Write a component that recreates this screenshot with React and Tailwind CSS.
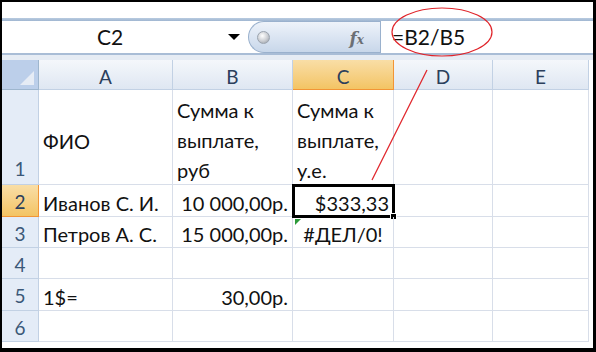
import React from "react";

const cols = ["A", "B", "C", "D", "E"];

function ColHeader({ label, active }) {
  return (
    <div
      className={`flex items-center justify-center pt-[5px] text-[19px] border-r border-b ${
        active
          ? "bg-gradient-to-b from-[#f9dea6] to-[#f3c463] border-[#f29536] text-[#2b3f5c]"
          : "bg-gradient-to-b from-[#f4f7fb] to-[#dfe7f2] border-[#c2d1e4] text-[#2b3f5c]"
      }`}
    >
      {label}
    </div>
  );
}

function RowHeader({ n, active, align = "center" }) {
  return (
    <div
      className={`flex justify-center text-[19px] border-r border-b ${
        align === "end" ? "items-end pb-[1px]" : "items-center pt-[4px]"
      } ${
        active
          ? "bg-gradient-to-b from-[#f9dea6] to-[#f3c463] border-[#f29536] text-[#2b3f5c]"
          : "bg-[#e4ecf7] border-[#c2d1e4] text-[#3b5878]"
      }`}
    >
      {n}
    </div>
  );
}

function Cell({ children, className = "" }) {
  return (
    <div className={`border-r border-b border-[#d8dee9] text-[20px] text-[#111] flex items-center px-[4px] pt-[4px] whitespace-nowrap ${className}`}>
      {children}
    </div>
  );
}

export default function App() {
  return (
    <div className="relative w-[596px] h-[352px] bg-white border-black border-t-2 border-l-2 border-r-[3px] border-b-[4px] font-['Lato',sans-serif] overflow-hidden">
      {/* ribbon bottom */}
      <div className="h-[16px] bg-white" />
      <div className="h-[3px] bg-gradient-to-b from-[#b9cbe0] to-[#9fb6d1]" />

      {/* formula bar */}
      <div className="flex h-[32px] bg-white">
        <div className="w-[246px] flex items-center relative">
          <span className="w-full text-center text-[21px] text-[#111] pr-[30px]">C2</span>
          <span className="absolute left-[226px] top-[13px] w-0 h-0 border-l-[6px] border-r-[6px] border-t-[6px] border-l-transparent border-r-transparent border-t-black" />
        </div>
        <div className="w-[132px] flex items-center rounded-l-full border border-r-0 border-[#9ab1cd] bg-gradient-to-b from-[#eef3fa] to-[#c8d7ea] relative">
          <span className="ml-[8px] w-[13px] h-[13px] rounded-full bg-[radial-gradient(circle_at_40%_35%,#ffffff,#c9ccd1_55%,#8e949c)] border border-[#9aa3ae]" />
          <span className="absolute right-[16px] top-[4px] font-['DejaVu_Serif',serif] italic text-[#6b6f75] text-[17px] font-bold">
            f<span className="text-[12px]">x</span>
          </span>
        </div>
        <div className="flex-1 flex items-center border-l border-[#9ab1cd] pl-[11px] text-[21px] text-[#111]">
          =B2/B5
        </div>
      </div>
      <div className="h-[2px] bg-[#a9bdd6]" />
      <div className="h-[5px] bg-[#e6ecf4]" />

      {/* grid */}
      <div className="grid grid-cols-[37px_134px_120px_101px_99px_96px] grid-rows-[30px_95px_32px_31px_31px_32px_31px] w-[587px]">
        <div className="relative bg-[#bccfea] border-r border-b border-[#9eb6ce]">
          <span className="absolute right-[4px] bottom-[4px] w-0 h-0 border-b-[14px] border-l-[14px] border-b-[#e6ecf5] border-l-transparent" />
        </div>
        {cols.map((c) => (
          <ColHeader key={c} label={c} active={c === "C"} />
        ))}

        {/* row 1 */}
        <RowHeader n="1" align="end" />
        <Cell className="pt-[8px]">ФИО</Cell>
        <Cell className="flex-col !items-start justify-center leading-[30px] !pt-[6px]">
          <span>Сумма к</span>
          <span>выплате,</span>
          <span>руб</span>
        </Cell>
        <Cell className="flex-col !items-start justify-center leading-[30px] !pt-[6px]">
          <span>Сумма к</span>
          <span>выплате,</span>
          <span>у.е.</span>
        </Cell>
        <Cell />
        <Cell />

        {/* row 2 */}
        <RowHeader n="2" active />
        <Cell>Иванов С. И.</Cell>
        <Cell className="justify-end">10 000,00р.</Cell>
        <Cell className="justify-end relative">
          <div className="absolute -left-[1px] -top-[1px] w-[103px] h-[34px] border-[3px] border-black" />
          <div className="absolute -right-[4px] -bottom-[4px] w-[7px] h-[7px] bg-black border border-white" />
          <span className="relative">$333,33</span>
        </Cell>
        <Cell />
        <Cell />

        {/* row 3 */}
        <RowHeader n="3" />
        <Cell>Петров А. С.</Cell>
        <Cell className="justify-end">15 000,00р.</Cell>
        <Cell className="justify-center relative">
          <span className="absolute left-[2px] top-[2px] w-0 h-0 border-t-[6px] border-r-[6px] border-t-[#2c9a3a] border-r-transparent" />
          #ДЕЛ/0!
        </Cell>
        <Cell />
        <Cell />

        {/* row 4 */}
        <RowHeader n="4" />
        <Cell />
        <Cell />
        <Cell />
        <Cell />
        <Cell />

        {/* row 5 */}
        <RowHeader n="5" />
        <Cell>1$=</Cell>
        <Cell className="justify-end">30,00р.</Cell>
        <Cell />
        <Cell />
        <Cell />

        {/* row 6 */}
        <RowHeader n="6" />
        <Cell />
        <Cell />
        <Cell />
        <Cell />
        <Cell />
      </div>

      {/* annotation */}
      <svg className="absolute left-[-2px] top-[-2px] pointer-events-none" width="596" height="352">
        <ellipse cx="442" cy="32" rx="50" ry="24" fill="none" stroke="#e0242a" strokeWidth="1.2" />
        <line x1="427" y1="70" x2="372" y2="180" stroke="#e0242a" strokeWidth="1.2" />
      </svg>
    </div>
  );
}
